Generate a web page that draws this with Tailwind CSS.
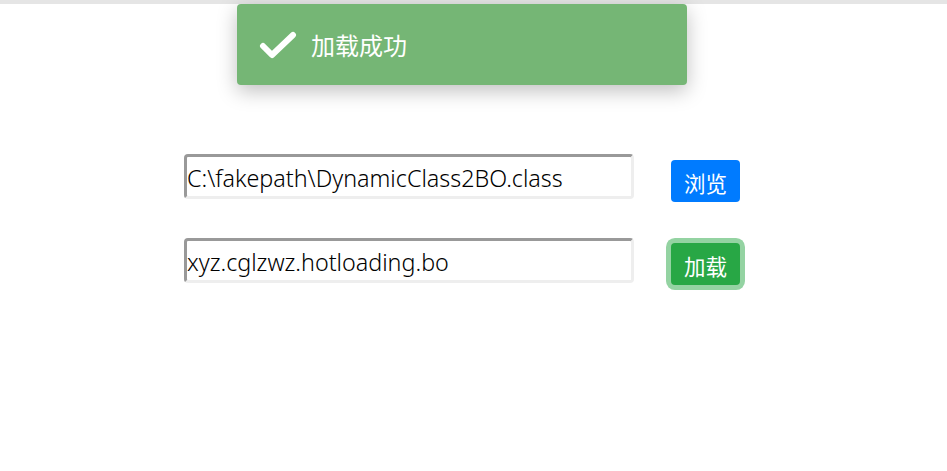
<!DOCTYPE html>
<html lang="en">
<head>
<meta charset="utf-8"/>
<meta content="width=device-width, initial-scale=1" name="viewport"/>
<title>Hot Loading</title>
<script src="https://cdn.jsdelivr.net/npm/@tailwindcss/browser@4"></script>
</head>
<body class="relative h-[471px] overflow-hidden bg-white font-['Noto_Sans','Noto_Sans_CJK_SC',sans-serif]">
  <div class="h-1 bg-[#e5e5e5]"></div>

  <!-- Toast -->
  <div class="absolute left-[237px] top-1 flex h-[81px] w-[450px] items-center rounded-[4px] bg-[#75b675] pl-[22px] shadow-[0_6px_20px_rgba(0,0,0,0.25)]">
    <svg class="h-[30px] w-[38px]" viewBox="0 0 38 30" fill="none" stroke="#fff" stroke-width="6" stroke-linecap="round" stroke-linejoin="round"><path d="M4 16 L13 25 L34 5"/></svg>
    <span class="ml-[14px] pt-[2px] text-[24px] leading-none text-white">加载成功</span>
  </div>

  <!-- Form -->
  <div class="flex flex-col gap-[36px] pl-[184px] pt-[150px]">
    <div class="flex items-start">
      <input type="text" value="C:\fakepath\DynamicClass2BO.class" class="h-[45px] w-[450px] rounded-[4px] border-[3px] border-t-[#999] border-r-[#eee] border-b-[#eee] border-l-[#999] pt-[2px] pl-0 text-[23.3px] font-light text-black outline-none"/>
      <button class="ml-[37px] mt-[6px] h-[42px] w-[69px] rounded-[4px] bg-[#007bff] pt-[5px] text-[21.5px] leading-none text-white">浏览</button>
    </div>
    <div class="flex items-start">
      <input type="text" value="xyz.cglzwz.hotloading.bo" class="h-[45px] w-[450px] rounded-[4px] border-[3px] border-t-[#999] border-r-[#eee] border-b-[#eee] border-l-[#999] pt-[2px] pl-0 text-[23.3px] font-light text-black outline-none"/>
      <button class="ml-[37px] mt-[5px] h-[42px] w-[69px] rounded-[4px] bg-[#28a745] pt-[5px] text-[21.5px] leading-none text-white ring-[5px] ring-[#94d3a2]">加载</button>
    </div>
  </div>
</body>
</html>
